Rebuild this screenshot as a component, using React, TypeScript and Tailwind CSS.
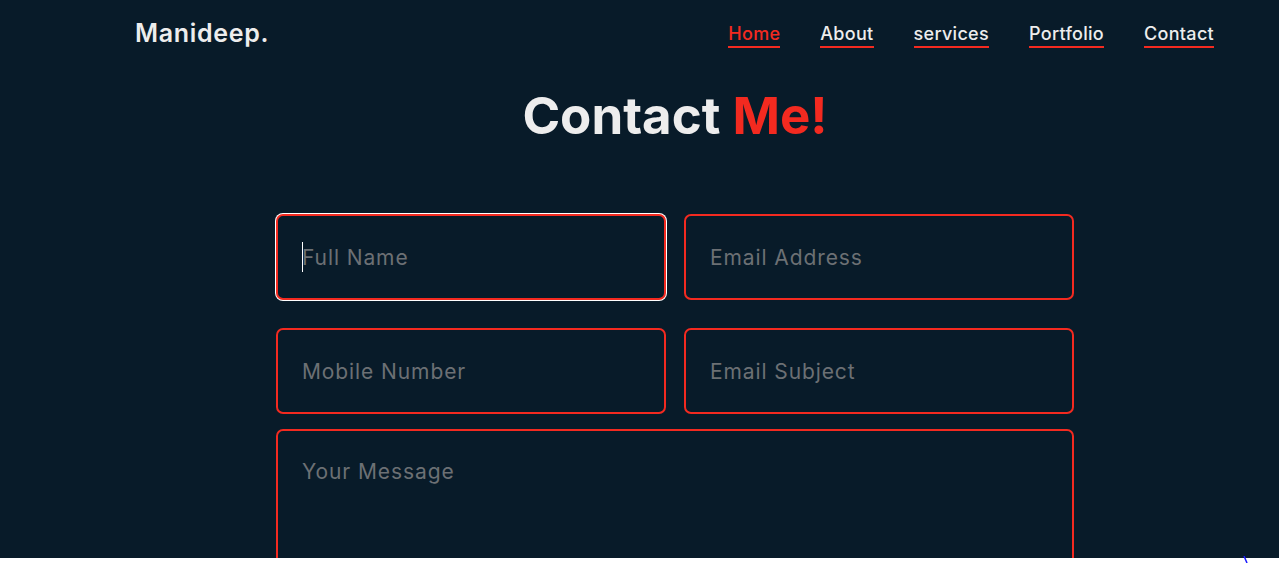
import React from "react";

const font = { fontFamily: "Inter, 'Open Sans', sans-serif" };

function Field({ ph, focused }: { ph: string; focused?: boolean }) {
  return (
    <div className="relative w-[390px]">
      <input
        readOnly
        placeholder={ph}
        className={
          "block w-full h-[86px] rounded-[7px] border-2 border-[#f32a20] bg-[#081b29] pl-[24px] text-[21px] tracking-[0.9px] text-white placeholder:text-[#6c7074] outline-none " +
          (focused ? "shadow-[0_0_0_1px_#ffffff]" : "")
        }
        style={font}
      />
      {focused && (
        <span className="absolute left-[26px] top-[28px] h-[30px] w-px bg-white" />
      )}
    </div>
  );
}

export default function App() {
  const links = ["Home", "About", "services", "Portfolio", "Contact"];
  return (
    <div className="relative w-[1279px] h-[563px] bg-white overflow-hidden" style={font}>
      <div className="relative h-[558px] overflow-hidden bg-[#081b29]">
        <header className="flex h-[68px] items-center justify-between pl-[135px] pr-[65px]">
          <div className="text-[25px] font-semibold tracking-[0.7px] text-[#ededed]">Manideep.</div>
          <nav className="flex gap-[40px] pt-[2px]">
            {links.map((l, i) => (
              <a
                key={l}
                className={
                  "border-b-2 border-[#f32a20] text-[18px] font-medium tracking-[0.3px] leading-[22px] pb-[1px] " +
                  (i === 0 ? "text-[#f32a20]" : "text-[#ededed]")
                }
              >
                {l}
              </a>
            ))}
          </nav>
        </header>
        <div className="pl-[71px]">
          <h2 className="mt-[12px] text-center text-[51px] font-bold leading-[72px] text-[#ededed]">
            Contact <span className="text-[#f32a20]">Me!</span>
          </h2>
          <form className="mx-auto mt-[62px] flex w-[798px] flex-col">
            <div className="flex justify-between">
              <Field ph="Full Name" focused />
              <Field ph="Email Address" />
            </div>
            <div className="mt-[28px] flex justify-between">
              <Field ph="Mobile Number" />
              <Field ph="Email Subject" />
            </div>
            <textarea
              readOnly
              placeholder="Your Message"
              className="mt-[15px] block h-[200px] w-full resize-none rounded-[7px] border-2 border-[#f32a20] bg-[#081b29] px-[24px] pt-[26px] text-[21px] tracking-[0.9px] leading-[30px] text-white placeholder:text-[#6c7074] outline-none"
              style={font}
            />
          </form>
        </div>
      </div>
      <svg className="absolute left-[1243px] top-[556px]" width="6" height="8" viewBox="0 0 6 8">
        <path d="M1 0 L4 7" stroke="#1a1aff" strokeWidth="1.5" />
      </svg>
    </div>
  );
}
